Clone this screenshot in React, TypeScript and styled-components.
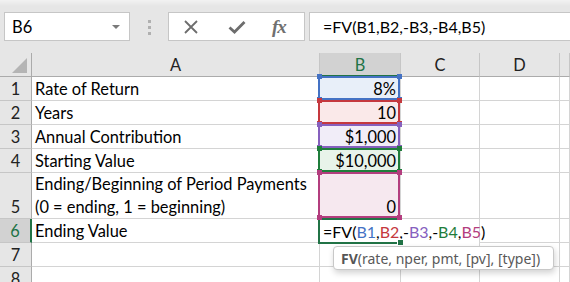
import React from 'react';
import styled, { createGlobalStyle, css } from 'styled-components';

const GlobalStyle = createGlobalStyle`
  html, body {
    margin: 0;
    padding: 0;
    background: #ffffff;
  }
`;

const green = '#217346';
const gridLine = '#d4d4d4';
const headerBg = '#e6e6e6';
const headerSelBg = '#d2d2d2';
const headerLine = '#ababab';

const refColors = [
  { line: '#4472c4', fill: '#e8eff9' },
  { line: '#c5383e', fill: '#fae9e9' },
  { line: '#8660be', fill: '#f1edf8' },
  { line: '#1f7d3b', fill: '#e8f3ea' },
  { line: '#b33d7e', fill: '#f6e8ef' },
];

const Sheet = styled.div`
  width: 570px;
  height: 282px;
  overflow: hidden;
  position: relative;
  background: #ffffff;
  font-family: 'Lato', 'Liberation Sans', sans-serif;
  color: #000;
`;

// formula bar
const Toolbar = styled.div`
  display: flex;
  align-items: flex-start;
  height: 53px;
  box-sizing: border-box;
  padding: 12px 0 0 4px;
  background: linear-gradient(#f2f2f2 0, #e6e6e6 6px);
`;

const NameBox = styled.div`
  width: 126px;
  height: 29px;
  box-sizing: border-box;
  background: #fff;
  border: 1px solid #c6c6c6;
  display: flex;
  align-items: center;
  justify-content: space-between;
  padding: 0 9px 0 7px;
  font-size: 16.5px;
`;

const DropArrow = styled.span`
  width: 0;
  height: 0;
  border-left: 4px solid transparent;
  border-right: 4px solid transparent;
  border-top: 4px solid #7a7a7a;
`;

const Grip = styled.div`
  display: flex;
  flex-direction: column;
  gap: 3px;
  margin: 8px 0 0 18px;
`;

const GripDot = styled.span`
  width: 3px;
  height: 3px;
  background: #b0b0b0;
`;

const FxGroup = styled.div`
  width: 137px;
  height: 29px;
  margin-left: 17px;
  box-sizing: border-box;
  background: #fff;
  border: 1px solid #c6c6c6;
  display: flex;
  align-items: center;
  padding-left: 14px;
  color: #6d6d6d;
`;

const IconSlot = styled.span<{ $gap: number }>`
  display: flex;
  margin-left: ${(p) => p.$gap}px;
`;

const FxLabel = styled.span`
  font-family: 'Liberation Serif', serif;
  font-style: italic;
  font-weight: 700;
  font-size: 19px;
  margin-left: 26px;
  letter-spacing: -1px;
  color: #707070;
`;

const FormulaInput = styled.div`
  flex: 1;
  height: 29px;
  margin: 0 -4px 0 4px;
  box-sizing: border-box;
  background: #fff;
  border: 1px solid #c6c6c6;
  display: flex;
  align-items: center;
  padding-left: 13px;
  font-size: 16px;
`;

// grid
const Grid = styled.div`
  display: grid;
  grid-template-columns: 32px 288px 81px 79px 80px 1fr;
  grid-template-rows: 24px 24px 24px 24px 24px 46px 24px 24px 24px;
`;

const cellBase = css`
  box-sizing: border-box;
  display: flex;
  align-items: flex-end;
  font-size: 16.4px;
  line-height: 23px;
  white-space: nowrap;
`;

const Corner = styled.div`
  ${cellBase};
  background: ${headerBg};
  border-right: 1px solid ${headerLine};
  border-bottom: 1px solid ${headerLine};
  position: relative;
  &::after {
    content: '';
    position: absolute;
    right: 4px;
    bottom: 3px;
    width: 0;
    height: 0;
    border-left: 15px solid transparent;
    border-bottom: 15px solid #b4b4b4;
  }
`;

const ColHeader = styled.div<{ $sel?: boolean }>`
  ${cellBase};
  align-items: center;
  justify-content: center;
  background: ${(p) => (p.$sel ? headerSelBg : headerBg)};
  color: ${(p) => (p.$sel ? green : '#222')};
  border-right: 1px solid #c6c6c6;
  border-bottom: ${(p) => (p.$sel ? `2px solid ${green}` : `1px solid ${headerLine}`)};
  padding-top: ${(p) => (p.$sel ? '1px' : '0')};
`;

const RowHeader = styled.div<{ $sel?: boolean }>`
  ${cellBase};
  justify-content: center;
  background: ${(p) => (p.$sel ? headerSelBg : headerBg)};
  color: ${(p) => (p.$sel ? green : '#222')};
  border-right: ${(p) => (p.$sel ? `2px solid ${green}` : `1px solid ${headerLine}`)};
  border-bottom: 1px solid #c6c6c6;
`;

const Cell = styled.div<{ $right?: boolean }>`
  ${cellBase};
  justify-content: ${(p) => (p.$right ? 'flex-end' : 'flex-start')};
  padding: 0 4px 0 3px;
  border-right: 1px solid ${gridLine};
  border-bottom: 1px solid ${gridLine};
`;

const WrapText = styled.div`
  white-space: normal;
  width: 282px;
`;

const RefCell = styled(Cell)<{ $fill: string; $line: string }>`
  position: relative;
  background: ${(p) => p.$fill};
  &::before {
    content: '';
    position: absolute;
    z-index: 1;
    top: -1px;
    left: -2px;
    right: 0;
    bottom: 0;
    border: 2px solid ${(p) => p.$line};
    pointer-events: none;
  }
`;

const Handle = styled.span<{ $color: string; $v: 'top' | 'bottom'; $h: 'left' | 'right' }>`
  position: absolute;
  z-index: 2;
  width: 5px;
  height: 5px;
  background: ${(p) => p.$color};
  ${(p) => (p.$v === 'top' ? 'top: -3px;' : 'bottom: -2px;')}
  ${(p) => (p.$h === 'left' ? 'left: -3px;' : 'right: -2px;')}
`;

const Editor = styled.div`
  ${cellBase};
  font-size: 16px;
  grid-column: span 2;
  position: relative;
  background: #fff;
  padding-left: 3px;
  border-right: 1px solid ${gridLine};
  overflow: visible;
  &::before {
    content: '';
    position: absolute;
    z-index: 1;
    top: -1px;
    left: -2px;
    width: 81px;
    bottom: -1px;
    border: 2px solid ${green};
    border-right: none;
  }
`;

const FillHandle = styled.span`
  position: absolute;
  z-index: 2;
  left: 77px;
  bottom: -3px;
  width: 5px;
  height: 5px;
  background: ${green};
  border: 1px solid #fff;
`;

const Ref = styled.span<{ $c: string }>`
  color: ${(p) => p.$c};
`;

const Tooltip = styled.div`
  position: absolute;
  left: 333px;
  top: 246px;
  width: 221px;
  height: 24px;
  box-sizing: border-box;
  background: #fff;
  border: 1px solid #c8c8c8;
  border-radius: 4px;
  box-shadow: 1px 3px 6px rgba(0, 0, 0, 0.18);
  display: flex;
  align-items: center;
  padding-left: 7px;
  font-family: 'Noto Sans', 'Open Sans', sans-serif;
  font-size: 14px;
  color: #595959;
  z-index: 5;
  white-space: nowrap;
`;

const Bold = styled.b`
  font-weight: 700;
  color: #555;
`;

const CancelIcon = () => (
  <svg width="16" height="16" viewBox="0 0 16 16">
    <path d="M2 2 L14 14 M14 2 L2 14" stroke="#6d6d6d" strokeWidth="1.8" fill="none" />
  </svg>
);

const EnterIcon = () => (
  <svg width="18" height="16" viewBox="0 0 18 16">
    <path d="M1.5 8.5 L6.5 13 L16.5 3" stroke="#6d6d6d" strokeWidth="2.8" fill="none" />
  </svg>
);

type Row = { n: number; a?: React.ReactNode; b?: string; ref?: number; edit?: boolean };

const rows: Row[] = [
  { n: 1, a: 'Rate of Return', b: '8%', ref: 0 },
  { n: 2, a: 'Years', b: '10', ref: 1 },
  { n: 3, a: 'Annual Contribution', b: '$1,000', ref: 2 },
  { n: 4, a: 'Starting Value', b: '$10,000', ref: 3 },
  {
    n: 5,
    a: (
      <WrapText>
        Ending/Beginning of Period Payments
        <br />
        (0 = ending, 1 = beginning)
      </WrapText>
    ),
    b: '0',
    ref: 4,
  },
  { n: 6, a: 'Ending Value', edit: true },
  { n: 7 },
  { n: 8 },
];

const formula = (
  <span>
    =FV(<Ref $c={refColors[0].line}>B1</Ref>,<Ref $c={refColors[1].line}>B2</Ref>,-
    <Ref $c={refColors[2].line}>B3</Ref>,-<Ref $c={refColors[3].line}>B4</Ref>,
    <Ref $c={refColors[4].line}>B5</Ref>)
  </span>
);

const App: React.FC = () => {
  return (
    <Sheet>
      <GlobalStyle />
      <Toolbar>
        <NameBox>
          B6
          <DropArrow />
        </NameBox>
        <Grip>
          <GripDot />
          <GripDot />
          <GripDot />
        </Grip>
        <FxGroup>
          <IconSlot $gap={0}>
            <CancelIcon />
          </IconSlot>
          <IconSlot $gap={29}>
            <EnterIcon />
          </IconSlot>
          <FxLabel>fx</FxLabel>
        </FxGroup>
        <FormulaInput>=FV(B1,B2,-B3,-B4,B5)</FormulaInput>
      </Toolbar>

      <Grid>
        <Corner />
        <ColHeader>A</ColHeader>
        <ColHeader $sel>B</ColHeader>
        <ColHeader>C</ColHeader>
        <ColHeader>D</ColHeader>
        <ColHeader />

        {rows.map((row) => {
          const c = row.ref !== undefined ? refColors[row.ref] : null;
          return (
            <React.Fragment key={row.n}>
              <RowHeader $sel={row.edit}>{row.n}</RowHeader>
              <Cell>{row.a}</Cell>
              {c ? (
                <RefCell $right $fill={c.fill} $line={c.line}>
                  {row.b}
                  <Handle $color={c.line} $v="top" $h="left" />
                  <Handle $color={c.line} $v="top" $h="right" />
                  <Handle $color={c.line} $v="bottom" $h="left" />
                  <Handle $color={c.line} $v="bottom" $h="right" />
                </RefCell>
              ) : row.edit ? (
                <Editor>
                  {formula}
                  <FillHandle />
                </Editor>
              ) : (
                <Cell />
              )}
              {!row.edit && <Cell />}
              <Cell />
              <Cell />
            </React.Fragment>
          );
        })}
      </Grid>

      <Tooltip>
        <Bold>FV</Bold>(rate, nper, pmt, [pv], [type])
      </Tooltip>
    </Sheet>
  );
};

export default App;
